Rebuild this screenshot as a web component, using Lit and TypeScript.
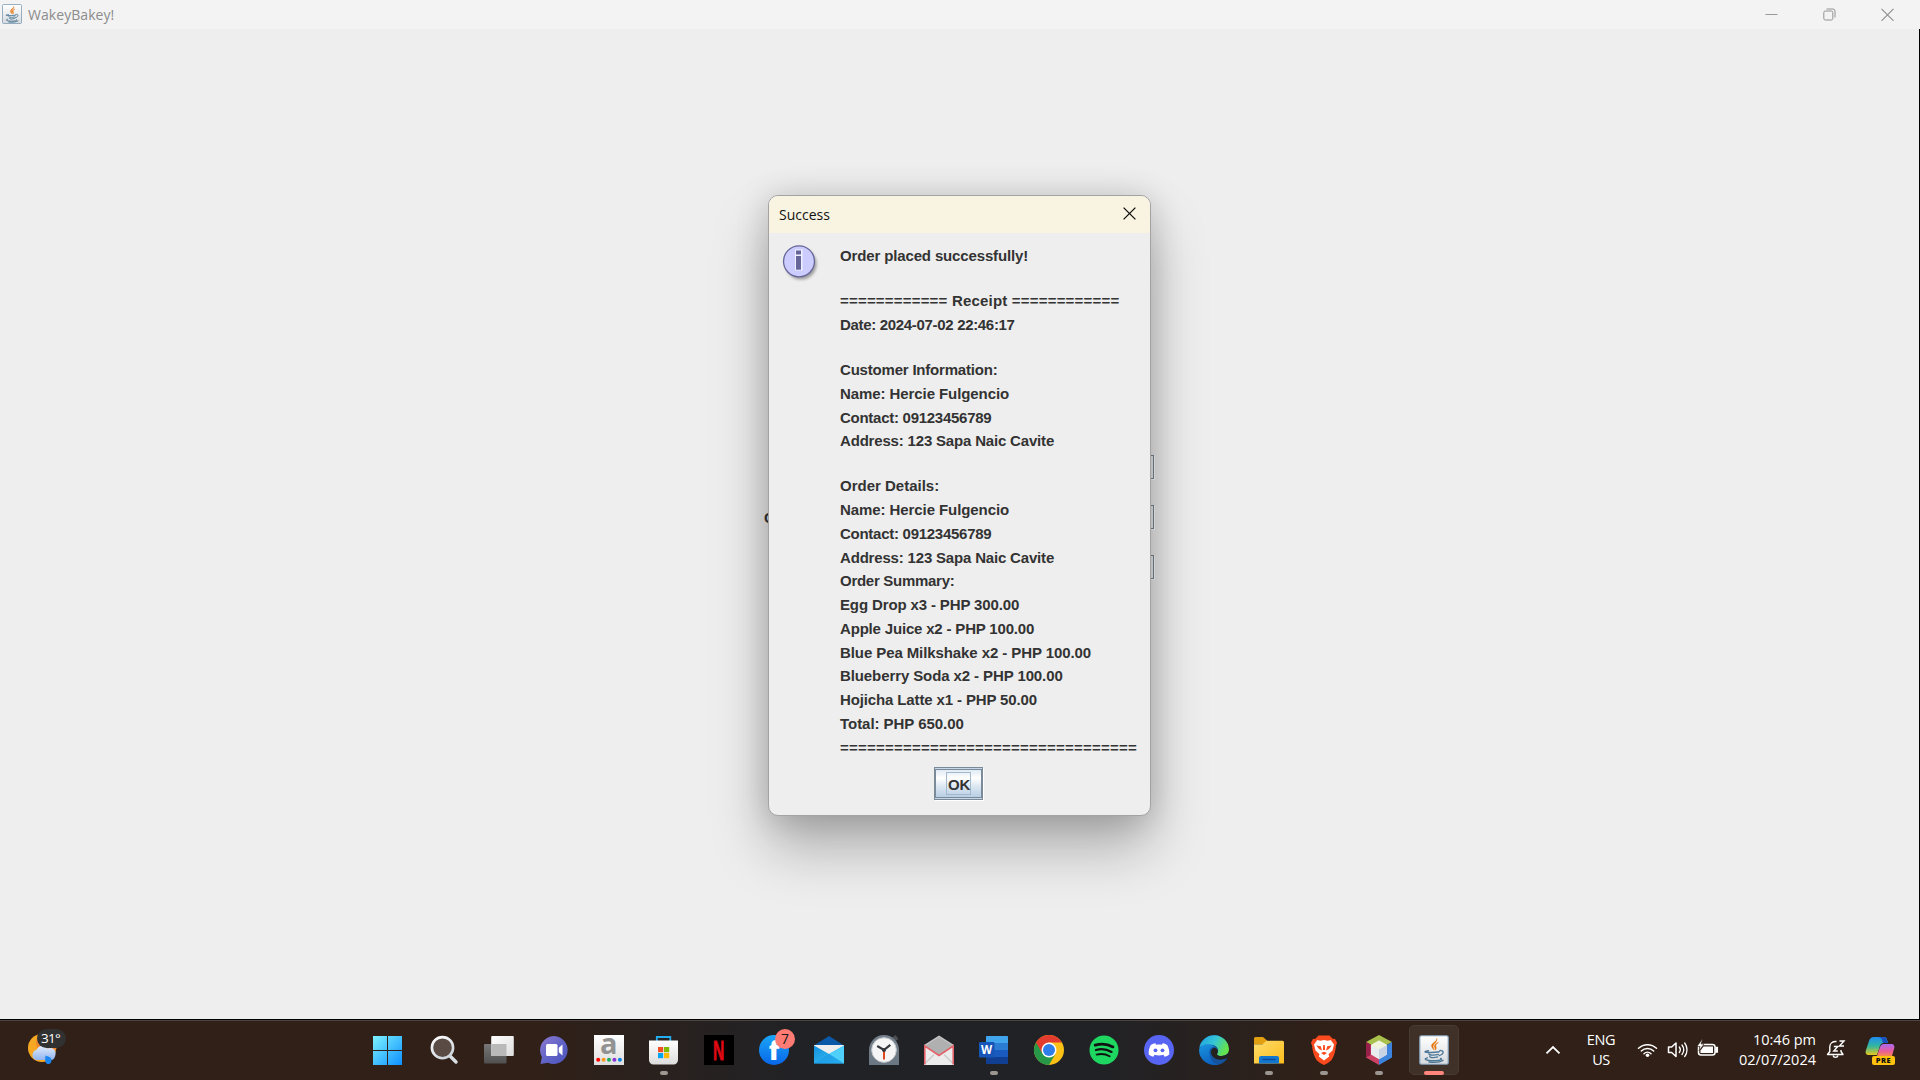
import { LitElement, html, css, svg } from "lit";
import { customElement } from "lit/decorators.js";

// height is the distance down to the next line of the receipt
interface ReceiptLine { text: string; height: number; spacing: number; }

const line = (text: string, spacing = 0, height = 24): ReceiptLine => ({ text, height, spacing });

const receipt: ReceiptLine[] = [
  line("Order placed successfully!", -0.14),
  line("", 0, 21),
  line("============ Receipt ============", 0.2),
  line("Date: 2024-07-02 22:46:17", -0.32),
  line("", 0, 21),
  line("Customer Information:", -0.2),
  line("Name: Hercie Fulgencio", -0.08),
  line("Contact: 09123456789", -0.27, 23),
  line("Address: 123 Sapa Naic Cavite", -0.18),
  line("", 0, 21),
  line("Order Details:"),
  line("Name: Hercie Fulgencio", -0.08),
  line("Contact: 09123456789", -0.27),
  line("Address: 123 Sapa Naic Cavite", -0.18, 23),
  line("Order Summary:", -0.28),
  line("Egg Drop x3 - PHP 300.00", -0.13),
  line("Apple Juice x2 - PHP 100.00", -0.18),
  line("Blue Pea Milkshake x2 - PHP 100.00", -0.09, 23),
  line("Blueberry Soda x2 - PHP 100.00", -0.1),
  line("Hojicha Latte x1 - PHP 50.00", -0.13),
  line("Total: PHP 650.00", -0.04),
  line("=================================", 0.24),
];

const javaCup = svg`
  <rect x="0.75" y="0.75" width="28.5" height="28.5" rx="1.5" fill="url(#jbg)" stroke="#7f9db5" stroke-width="1.2"/>
  <path d="M17.6 3.5c1 3-5.600 4.500-5 7.700.3 1.500 1.500 2.300 2.300 3.600-.3-2.300-1.400-2.800-.6-4.500.9-2 4.300-3.400 3.300-6.800z" fill="#e76f00" stroke="#e76f00" stroke-width=".5"/>
  <path d="M19.400 7.500c-2.400 1-4.300 2.200-4 4 .2 1.200 1.300 1.800.6 3.700 1.300-1.200 1.600-2.300.9-3.500-.7-1.300.2-2.700 2.500-4.200z" fill="#e76f00" stroke="#e76f00" stroke-width=".5"/>
  <g fill="none" stroke="#4e7896" stroke-width="1.400" stroke-linecap="round">
    <path d="M9.500 15.800c-4 .3-4.600 1.400-1.600 1.600 3.800.3 8.800.1 12.300-.6"/>
    <path d="M20.800 15.600c4-.8 5 3.200-.6 5"/>
    <path d="M10 18.800c-.8 1.800 6.500 1.500 9.300.6M10.800 21.500c0 1.500 5 1.300 7.800.4"/>
    <path d="M8.300 22.800c-6.500 2 4 3.600 10.700 2.700 2.800-.4 4.600-1.600 2.600-2"/>
    <path d="M10 27c5 .7 11.500.1 14-1.600"/>
  </g>`;

const javaDefs = svg`<defs><linearGradient id="jbg" x2="0" y2="1"><stop offset="0" stop-color="#fff"/><stop offset="1" stop-color="#d6dade"/></linearGradient></defs>`;

interface TaskItem { name: string; state?: "running" | "active"; art: unknown; }

const tasks: TaskItem[] = [
  { name: "start", art: svg`
    <defs><linearGradient id="win" gradientUnits="userSpaceOnUse" x1="0" y1="0" x2="30" y2="30"><stop offset="0" stop-color="#7df3ff"/><stop offset="1" stop-color="#0a8cff"/></linearGradient></defs>
    <path transform="translate(-1 1)" fill="url(#win)" d="M0 0h14v14H0zM15 0h14v14H15zM0 15h14v14H0zM15 15h14v14H15z"/>` },
  { name: "search", art: svg`
    <defs><linearGradient id="sea" x2="0.6" y2="1"><stop offset="0" stop-color="#fff"/><stop offset="1" stop-color="#cfd6dc"/></linearGradient></defs>
    <path d="M20 20l7 7" stroke="#d9dfe5" stroke-width="3.400" stroke-linecap="round"/>
    <circle cx="13.500" cy="12.700" r="10.600" fill="#5a4b45" stroke="url(#sea)" stroke-width="2.600"/>` },
  { name: "taskview", art: svg`
    <defs><linearGradient id="tv1" x2="0" y2="1"><stop offset="0" stop-color="#777"/><stop offset="1" stop-color="#505050"/></linearGradient>
    <linearGradient id="tv2" x2="1" y2="1"><stop offset="0" stop-color="#fff"/><stop offset="1" stop-color="#ddd"/></linearGradient></defs>
    <rect x="0" y="9" width="22.500" height="19.500" rx="1" fill="url(#tv1)"/>
    <rect x="7.200" y="1" width="22.600" height="20" rx="1" fill="url(#tv2)"/>
    <path d="M7.200 9h15.300v12H8.200a1 1 0 0 1-1-1z" fill="#b9b9b9"/>` },
  { name: "chat", art: svg`
    <defs><linearGradient id="cht" x2="1" y2="1"><stop offset="0" stop-color="#8e7bd0"/><stop offset=".5" stop-color="#6264c7"/><stop offset="1" stop-color="#4b53bc"/></linearGradient></defs>
    <path d="M15 1a14 14 0 1 1-6 26.800L1.500 29l1.400-7A14 14 0 0 1 15 1z" fill="url(#cht)"/>
    <rect x="7" y="9" width="11.500" height="12" rx="1.500" fill="#fff"/><path d="M19.800 12.800l3.700-3.300v11l-3.700-3.300z" fill="#fff"/>` },
  { name: "amazon", art: svg`
    <defs><linearGradient id="amz" x2="0" y2="1"><stop offset="0" stop-color="#fff"/><stop offset="1" stop-color="#dedede"/></linearGradient></defs>
    <rect width="30" height="30" fill="url(#amz)"/>
    <text x="14.800" y="19" font-family="Open Sans, sans-serif" font-weight="700" font-size="29" text-anchor="middle" fill="#929292">a</text>
    <circle cx="4.200" cy="24.700" r="2" fill="#f00"/><circle cx="9.600" cy="24.700" r="2" fill="#f79a1c"/><circle cx="15" cy="24.700" r="2" fill="#1fae5b"/><circle cx="20.400" cy="24.700" r="2" fill="#8c35d6"/><circle cx="25.900" cy="24.700" r="2" fill="#0a84e0"/>` },
  { name: "store", state: "running", art: svg`
    <defs><linearGradient id="sto" x2="0" y2="1"><stop offset="0" stop-color="#fff"/><stop offset="1" stop-color="#dcdcdc"/></linearGradient></defs>
    <path d="M7.800 6V2h13.500v4" fill="none" stroke="#22aef0" stroke-width="1.800"/>
    <path d="M0 5.500h29V25a4.500 4.500 0 0 1-4.500 4.500h-20A4.500 4.500 0 0 1 0 25z" fill="url(#sto)"/>
    <path fill="#f25022" d="M9 12h5.200v5.200H9z"/><path fill="#7fba00" d="M15 12h5.200v5.200H15z"/><path fill="#00a4ef" d="M9 18h5.200v5.200H9z"/><path fill="#ffb900" d="M15 18h5.200v5.200H15z"/>` },
  { name: "netflix", art: svg`
    <rect width="30" height="30" fill="#000"/>
    <text transform="translate(14.700 24.600) scale(.58 1)" font-family="Liberation Sans, sans-serif" font-weight="700" font-size="27" text-anchor="middle" fill="#e50914" stroke="#c40812" stroke-width="1">N</text>` },
  { name: "facebook", art: svg`
    <defs><linearGradient id="fbk" x2="0" y2="1"><stop offset="0" stop-color="#1ba6f7"/><stop offset="1" stop-color="#0866e8"/></linearGradient></defs>
    <circle cx="15" cy="15" r="15" fill="url(#fbk)"/>
    <text x="15" y="24.800" font-family="Open Sans, sans-serif" font-weight="800" font-size="26" text-anchor="middle" fill="#fff">f</text>
    <circle cx="26" cy="4" r="10" fill="#ff7b74"/>
    <text x="26" y="9" font-family="Open Sans, sans-serif" font-size="14" text-anchor="middle" fill="#1c1c1c">7</text>` },
  { name: "mail", art: svg`
    <defs><linearGradient id="mai" x2="1" y2="1"><stop offset="0" stop-color="#1490df"/><stop offset="1" stop-color="#3ac4f5"/></linearGradient></defs>
    <path d="M0 10.500L15 1l15 9.500z" fill="#0a58a8"/><path d="M0 10h30v10H0z" fill="#eee"/>
    <path d="M0 10.500L15 19l15-8.500V28.500H0z" fill="url(#mai)"/><path d="M15 19l15-8.500V28.500z" fill="#4fd0fa"/><path d="M15 19l15 9.500H0z" fill="#1b9be6" opacity=".65"/>` },
  { name: "clock", art: svg`
    <defs><linearGradient id="clk" x2="0" y2="1"><stop offset="0" stop-color="#75818c"/><stop offset="1" stop-color="#6b7782"/></linearGradient></defs>
    <path d="M22.500 3l4-3 3 4-4 3z" fill="#4b4f54"/>
    <path d="M0 15a15 15 0 0 1 30 0v15H0z" fill="url(#clk)"/><circle cx="15" cy="15" r="12.300" fill="#f5f5f5" stroke="#c6cace" stroke-width="1"/>
    <path d="M15 15v9.500" stroke="#e1491f" stroke-width="2"/><path d="M8.200 11L15 15l6.300-5.200" fill="none" stroke="#34383c" stroke-width="2.200"/><circle cx="15" cy="15" r="2" fill="#34383c"/>` },
  { name: "letter", art: svg`
    <path d="M0 10L15 .5 30 10v20H0z" fill="#c5c5c5"/><path d="M1 11L15 2l14 9-14 9z" fill="#b0b0b0"/>
    <path d="M0 10.500l15 10 15-10V30H0z" fill="#ececec"/><path d="M1 28.500l9-9M29 28.500l-9-9" stroke="#ccc" stroke-width="1.500"/>
    <path d="M.8 29.500V11L15 20.500 29.200 11v18.500" fill="none" stroke="#e4626a" stroke-width="1.600"/>` },
  { name: "word", state: "running", art: svg`
    <rect x="7" y="1" width="22" height="28" rx="1" fill="#185abd"/><path d="M8 1h20a1 1 0 0 1 1 1v6H7V2a1 1 0 0 1 1-1z" fill="#41a5ee"/><path d="M7 8h22v7H7z" fill="#2b7cd3"/><path d="M7 22h22v6a1 1 0 0 1-1 1H8a1 1 0 0 1-1-1z" fill="#103f91"/>
    <rect y="7" width="15.500" height="15.500" rx="1" fill="#1756b8"/>
    <text x="7.600" y="18.800" font-family="Open Sans, sans-serif" font-weight="700" font-size="11.500" text-anchor="middle" fill="#fff">W</text>` },
  { name: "chrome", art: svg`
    <circle cx="15" cy="15" r="15" fill="#fbc116"/>
    <path d="M15 15L2 7.500A15 15 0 0 0 15 30l6.500-11.300z" fill="#279847"/>
    <path d="M2 7.500A15 15 0 0 1 28 7.500H15L8.500 18.800z" fill="#e33b2e"/>
    <circle cx="15" cy="15" r="7.500" fill="#fff"/><circle cx="15" cy="15" r="6" fill="#2f7de9"/>` },
  { name: "spotify", art: svg`
    <circle cx="15" cy="15" r="14.500" fill="#1ed760"/>
    <g fill="none" stroke="#111" stroke-linecap="round"><path d="M6.200 10.200c6-1.700 12.800-1 17.800 1.700" stroke-width="2.800"/><path d="M7 15c5.200-1.400 11-.7 15.500 1.900" stroke-width="2.300"/><path d="M7.600 19.600c4.600-1.200 9-.7 13 1.600" stroke-width="1.900"/></g>` },
  { name: "discord", art: svg`
    <circle cx="15" cy="15" r="15" fill="#5865f2"/>
    <path d="M11.300 8.300c-2 .4-3.500 1-4.500 1.600C5.300 12.600 4.500 15.500 4.700 19.400c1.500 1.100 3 1.800 4.700 2.300l1.200-1.900c2.800.8 6 .8 8.800 0l1.200 1.900c1.700-.5 3.300-1.200 4.700-2.300.2-3.900-.7-6.900-2.100-9.500-1-.6-2.600-1.200-4.500-1.600l-.8 1.500c-2-.3-3.900-.3-5.800 0z" fill="#fff"/>
    <circle cx="11.500" cy="15.300" r="1.900" fill="#5865f2"/><circle cx="18.500" cy="15.300" r="1.900" fill="#5865f2"/>` },
  { name: "edge", art: svg`
    <defs><linearGradient id="ed1" x2="1" y2=".4"><stop offset="0" stop-color="#1f9de4"/><stop offset=".55" stop-color="#35c5d6"/><stop offset="1" stop-color="#63e34f"/></linearGradient>
    <linearGradient id="ed2" x2=".4" y2="1"><stop offset="0" stop-color="#1a95e0"/><stop offset="1" stop-color="#0d62c0"/></linearGradient></defs>
    <path d="M15 0a15 15 0 0 1 14 9l-1 15a15 15 0 1 1-13-24z" fill="#124e96"/>
    <path d="M.2 13A15 15 0 0 1 30 14c0 5-4 7-8 7-3 0-5-1.300-3.600-2.700 2-2.500 0-8.500-6.400-8.500C6 9.500 2 11 .2 13z" fill="url(#ed1)"/>
    <path d="M0 15C.5 11 5 8.700 9.500 9.200c3.500.4 6 1.800 7 3.500C13 11 10.500 14 10.500 17c0 6 5 10 10 11.900A15 15 0 0 1 0 15z" fill="url(#ed2)"/>
    <path d="M27.500 23.300C24 26 13 26 12 17.500c0-2.500 1.400-4 3-4.700 3 .6 5 3 3.400 5.500-1 1.400.6 2.700 3.600 2.700 2 0 5-1 6.500-2.300 1 1 .5 3-1 4.600z" fill="#25211f"/>
    <path d="M11.800 16c-.6 6 6 10 12 8.500 1.500-.4 2.800-.8 3.400-.5-2 3-5.500 5-8.500 5.600C13 28 10 22 11.800 16z" fill="#14539d"/>` },
  { name: "explorer", state: "running", art: svg`
    <defs><linearGradient id="fol" x2="1" y2="1"><stop offset="0" stop-color="#ffdc6b"/><stop offset="1" stop-color="#fbbd1c"/></linearGradient></defs>
    <path d="M0 3.500A1.500 1.500 0 0 1 1.500 2H9l4 3.500V9H0z" fill="#e2a010"/><path d="M0 9.200h8.500l4-3.400H28.500A1.500 1.500 0 0 1 30 7.300V28.500H0z" fill="url(#fol)"/>
    <path d="M5 28.500V23a2 2 0 0 1 2-2h16a2 2 0 0 1 2 2v5.500z" fill="#1376cf"/><path d="M8.500 24.500h13" stroke="#0b4d95" stroke-width="1.400"/>` },
  { name: "brave", state: "running", art: svg`
    <path d="M9.500.5h11L24 4l2-.3 2 4-1 2.800c-.5 5.500-2 11-4.500 14.500-2 2-5 4-7.500 5-2.500-1-5.500-3-7.500-5C5 21.500 3.500 16 3 10.500L2 7.700l2-4 2 .3z" fill="#fb4b1e"/>
    <path d="M8.300 5l3 .8L15 5l3.700.8 3-.8 3.300 4.500-1.500 6-4 3.700.7 2.300L15 25.500l-5.200-4 .7-2.300-4-3.700-1.500-6z" fill="#fff"/>
    <path d="M7.300 10.500l4.500.8 1.200 4.200-3-1.500zM22.700 10.500l-4.500.8-1.200 4.200 3-1.500zM12 18l3-1.300 3 1.300-3 2zM14.200 10h1.600l.3 5h-2.200z" fill="#fb4b1e"/>` },
  { name: "netbeans", state: "running", art: svg`
    <path d="M15 0l13 7-13 7L2 7z" fill="#a9c14c"/><path d="M2 7l13 8v15L2 22.500z" fill="#cc4264"/><path d="M28 7l-13 8v15l13-7.500z" fill="#3c83dd"/>
    <path d="M2 7l4.500 2.500v10.500L2 22.500z" fill="#96204a"/>
    <path d="M15 5.500l8 4.500v9.500l-8 4.700-8-4.700V10z" fill="#e9edf0"/><path d="M15 5.500l8 4.500-8 4.500L7 10z" fill="#f0f4dc"/><path d="M15 14.500l8-4.500v9.500l-8 4.700z" fill="#c8d4e4"/>` },
  { name: "java", state: "active", art: svg`${javaDefs}${javaCup}` },
];

@customElement("task-button")
class TaskButton extends LitElement {
  static properties = { item: { attribute: false } };
  declare item: TaskItem;
  static styles = css`
    :host { display: flex; flex: 1 1 0; justify-content: center; }
    .tile { box-sizing: border-box; width: 50px; height: 50px; padding-top: 9px; display: flex; flex-direction: column; align-items: center; gap: 6px; border: 1px solid transparent; border-radius: 5px; }
    .tile.active { background: #3f3028; border-color: #493b33; }
    .art { width: 30px; height: 30px; overflow: visible; flex: none; display: block; }
    .mark { width: 8px; height: 4px; flex: none; border-radius: 2px; background: #9c9691; }
    .tile.active .mark { width: 20px; background: #ff857d; }
  `;
  render() {
    return html`<div class="tile ${this.item.state ?? ""}">
      <svg class="art" viewBox="0 0 30 30">${this.item.art}</svg>
      ${this.item.state ? html`<span class="mark"></span>` : ""}
    </div>`;
  }
}

@customElement("message-dialog")
class MessageDialog extends LitElement {
  static styles = css`
    :host { box-sizing: border-box; display: flex; flex-direction: column; width: 383px; height: 621px; border: 1px solid #a3a3a3; border-radius: 10px; background: #eee; overflow: hidden;
      box-shadow: 0 32px 56px rgba(0,0,0,.27), 0 2px 32px rgba(0,0,0,.17); }
    .head { height: 37px; flex: none; box-sizing: border-box; background: #f9f3e1; display: flex; align-items: center; justify-content: space-between; padding: 0 14px 0 10px; font: 14px/37px "Open Sans", sans-serif; letter-spacing: 0; color: #111; }
    .close { width: 13px; height: 13px; margin-top: -2px; }
    .body { display: flex; padding: 10px 0 0 13px; height: 513px; flex: none; box-sizing: border-box; }
    .info { width: 40px; height: 40px; flex: none; }
    .lines { padding: 1px 0 0 18px; font: bold 15px/24px "Liberation Sans", Arial, sans-serif; color: #333; white-space: pre; }
    .foot { display: flex; justify-content: center; padding: 21px 0 0 0; }
    .ok { box-sizing: border-box; width: 49px; height: 33px; margin-right: 2px; border: 1px solid #7a8a99; background: #c5d7e8; padding: 1px 0; box-shadow: 1px 1px 0 #fff; }
    .face { box-sizing: border-box; height: 29px; border: 1px solid #7a8a99; display: flex; align-items: center; justify-content: center; background: linear-gradient(#e0eaf4, #fff 30%, #dce7f1 60%, #b8cfe5); }
    .focus { box-sizing: border-box; width: 25px; height: 23px; border: 1px solid #a3b8cc; padding-left: 1px; font: bold 15px/23px "Liberation Sans", Arial, sans-serif; letter-spacing: -.2px; color: #333; }
  `;
  render() {
    return html`
      <div class="head"><span>Success</span>
        <svg class="close" viewBox="0 0 13 13"><path d="M.6.6l11.800 11.800M12.400.6L.6 12.400" stroke="#111" stroke-width="1.300"/></svg>
      </div>
      <div class="body">
        <svg class="info" viewBox="0 0 40 40">
          <defs><filter id="sh" x="-30%" y="-30%" width="160%" height="160%"><feGaussianBlur stdDeviation="1.6"/></filter></defs>
          <circle cx="19" cy="21" r="15.500" fill="#777" opacity=".7" filter="url(#sh)"/>
          <circle cx="17" cy="18.300" r="15.500" fill="#ccccff" stroke="#666699" stroke-width="1.300"/>
          <rect x="13" y="6.500" width="7.500" height="21" fill="#f0f0ff"/>
          <rect x="14" y="7.500" width="5" height="4" fill="#666699"/><rect x="14" y="13" width="5" height="13.700" fill="#666699"/>
        </svg>
        <div class="lines">${receipt.map((l) => html`<div style="height:${l.height}px;letter-spacing:${l.spacing}px">${l.text}</div>`)}</div>
      </div>
      <div class="foot"><div class="ok"><div class="face"><div class="focus">OK</div></div></div></div>`;
  }
}

@customElement("app-root")
class AppRoot extends LitElement {
  static styles = css`
    :host { display: flex; flex-direction: column; width: 1920px; height: 1080px; overflow: hidden; background: #eee; font-family: "Open Sans", sans-serif; }
    .titlebar { height: 29px; flex: none; display: flex; align-items: center; background: #f3f3f3; color: #8c8c8c; }
    .appicon { width: 20px; height: 20px; margin: 0 6px 1px 2px; }
    .title { flex: 1; font-size: 14px; letter-spacing: 0.06px; line-height: 29px; }
    .controls { display: flex; gap: 45px; padding: 0 26px 1px 0; }
    .controls svg { width: 13px; height: 13px; }
    .workspace { position: relative; height: 990px; flex: none; box-sizing: border-box; border-right: 1px solid #000; }
    .form { position: absolute; left: 764px; top: 426px; width: 390px; display: grid; grid-template-columns: 100px 1fr; row-gap: 26px; font: bold 15px/26px "Liberation Sans", Arial, sans-serif; color: #333; }
    .form span { height: 24px; }
    .field { box-sizing: border-box; border: 1px solid #7a8a99; background: #eee; box-shadow: 1px 1px 0 #fff; }
    message-dialog { position: absolute; left: 768px; top: 166px; }
    .taskbar { height: 61px; flex: none; box-sizing: border-box; border-top: 1px solid #000; display: flex; color: #fff; background: linear-gradient(#4d4440, #4d4440) 0 0 / 100% 1px no-repeat, linear-gradient(90deg, #312017 0, #312017 520px, #212226 800px, #212226 1100px, #302017 1330px, #302017); }
    .weather { width: 361.5px; flex: none; padding: 8px 0 0 26px; box-sizing: border-box; }
    .weather svg { width: 44px; height: 40px; display: block; }
    .apps { width: 1100px; flex: none; display: flex; padding-top: 5px; box-sizing: border-box; }
    .tray { flex: 1; display: flex; align-items: flex-start; font-size: 15px; line-height: 20px; }
    .tray svg { display: block; flex: none; }
    .chev { width: 16px; height: 10px; margin: 25px 0 0 83.5px; }
    .lang { width: 50px; margin: 10px 0 0 15px; text-align: center; font-size: 14.500px; letter-spacing: -.4px; }
    .net { width: 84px; height: 20px; margin: 19px 0 0 11px; }
    .clock { width: 92px; margin: 10px 0 0 3px; text-align: right; font-size: 14.500px; letter-spacing: 0; white-space: nowrap; }
    .bell { width: 20px; height: 20px; margin: 19px 0 0 10px; }
    .copilot { width: 32px; height: 30px; margin: 16px 0 0 19px; }
  `;
  render() {
    return html`
      <div class="titlebar">
        <svg class="appicon" viewBox="0 0 30 30">${javaDefs}${javaCup}</svg>
        <span class="title">WakeyBakey!</span>
        <div class="controls">
          <svg viewBox="0 0 13 13"><path d="M.5 6.5h12" stroke="#999"/></svg>
          <svg viewBox="0 0 13 13" fill="none" stroke="#929292"><rect x=".8" y="3" width="9" height="9" rx="1.500"/><path d="M3.500 1h6.500a2 2 0 0 1 2 2v6.500"/></svg>
          <svg viewBox="0 0 13 13"><path d="M.5.8l12 12M12.500.8l-12 12" stroke="#8c8c8c" stroke-width="1.100"/></svg>
        </div>
      </div>
      <div class="workspace">
        <div class="form">
          <span></span><span class="field"></span>
          <span>C</span><span class="field"></span>
          <span></span><span class="field"></span>
        </div>
        <message-dialog></message-dialog>
      </div>
      <div class="taskbar">
        <div class="weather"><svg viewBox="0 0 44 40">
          <defs><linearGradient id="cl" x2="0" y2="1"><stop offset="0" stop-color="#e4ecfb"/><stop offset="1" stop-color="#8fb4f0"/></linearGradient></defs>
          <circle cx="16" cy="20" r="14" fill="#f7a823"/><circle cx="21" cy="15" r="11" fill="#f08a2c"/>
          <path d="M11 32a5 5 0 0 1-4.500-5c0-3 2-5 4-5 2-5 9-5.500 11-1.500 5-2 9 1.500 8 6-.5 3.500-2 5.500-4.500 5.500z" fill="url(#cl)"/>
          <path d="M19.500 27.500l4 1.500c2 1 2.500 3 1.500 5.500-1 2-4.500 2.200-5.500-.5-.6-2-.2-4 0-6.500z" fill="#1a86f2"/>
          <rect x="11" y="1" width="29" height="19" rx="9.500" fill="#303130"/>
          <text x="24.500" y="15.300" text-anchor="middle" font-family="Open Sans, sans-serif" font-size="13.500" font-weight="500" letter-spacing="-.8" fill="#fff">31°</text>
        </svg></div>
        <div class="apps">${tasks.map((t) => html`<task-button .item=${t}></task-button>`)}</div>
        <div class="tray">
          <svg class="chev" viewBox="0 0 16 10"><path d="M1.500 8.300L8 2l6.500 6.300" fill="none" stroke="#fff" stroke-width="1.800"/></svg>
          <div class="lang">ENG<br />US</div>
          <svg class="net" viewBox="0 0 84 20" fill="none" stroke="#fff" stroke-width="1.500">
            <path d="M1.500 9.300a13 13 0 0 1 18 0M4.300 12a9 9 0 0 1 12.400 0M7 14.700a5 5 0 0 1 7 0" stroke-linecap="round"/><circle cx="10.500" cy="16.200" r="1.800" fill="#fff" stroke="none"/>
            <path d="M31.500 8h3.200l4.300-4v13.500l-4.300-4h-3.200z" stroke-linejoin="round"/><path d="M42.300 8a4.500 4.500 0 0 1 0 5.500M45 6a8 8 0 0 1 0 9.500M47.700 4a11 11 0 0 1 0 13.500" stroke-linecap="round" stroke-width="1.300"/>
            <rect x="61.500" y="5.500" width="16.500" height="10.500" rx="2.500"/><path d="M66.500 7.500h9.500v6.500H63.500v-2.500z" fill="#fff" stroke="none"/><path d="M79 8.500h1.300v4.500H79z" fill="#fff"/><path d="M65 .5l-5 7h3l-1 4.500 5-7h-3l1.500-4.500z" fill="#fff" stroke="#302017" stroke-width=".6"/>
          </svg>
          <div class="clock">10:46 pm<br />02/07/2024</div>
          <svg class="bell" viewBox="0 0 20 20" fill="none" stroke="#fff" stroke-width="1.400"><path d="M10.500 2.500H9A5.500 5.500 0 0 0 3.800 8v4.500L1.500 15.500H17l-2-3V11" stroke-linejoin="round"/><path d="M7 16.500a2.600 2.600 0 0 0 5 0"/><path d="M7.800 7.500h4L7.800 12h4M13.500 2h4.500l-4.500 5H18"/></svg>
          <svg class="copilot" viewBox="0 0 32 30">
            <defs><linearGradient id="c1" x2="0" y2="1"><stop offset="0" stop-color="#1f8df0"/><stop offset=".5" stop-color="#31b6a0"/><stop offset="1" stop-color="#e8c91c"/></linearGradient>
            <linearGradient id="c2" x2="0" y2="1"><stop offset="0" stop-color="#a86bf0"/><stop offset=".6" stop-color="#ea5c9c"/><stop offset="1" stop-color="#f58a4c"/></linearGradient></defs>
            <path d="M9 1h10c2.500 0 3 2 4 6h-4c-3 0-4 2-5 6l-2 6H4c-3 0-4-2-3-5L4 5c.8-2.500 2.500-4 5-4z" fill="url(#c1)"/><path d="M18 1c3 0 4 2 5 6h-5c-1-4-1.500-5-4-6z" fill="#1a50c0"/>
            <path d="M19 8h7c3 0 4 2 3 5l-2 7H12l3-9c.7-2 2-3 4-3z" fill="url(#c2)"/>
            <rect x="7" y="20" width="23" height="9" rx="2" fill="#ffc20e"/><text x="18.500" y="27.300" font-family="Open Sans, sans-serif" font-size="7.500" font-weight="800" letter-spacing=".5" text-anchor="middle" fill="#111">PRE</text>
          </svg>
        </div>
      </div>`;
  }
}
